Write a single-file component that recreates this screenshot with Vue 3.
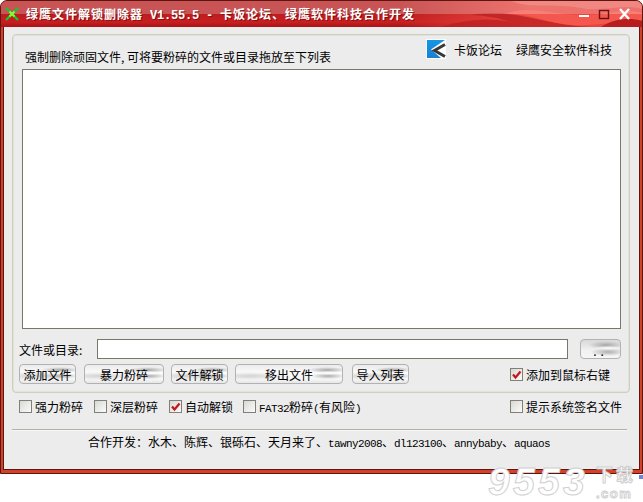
<template>
  <div class="win">
    <div class="titlebar">
      <svg class="flames" width="643" height="26" viewBox="0 0 643 26" preserveAspectRatio="none">
        <defs>
          <linearGradient id="fade" x1="0" x2="1" y1="0" y2="0">
            <stop offset="0.62" stop-color="#ef4c44" stop-opacity="0" />
            <stop offset="0.82" stop-color="#ef4c44" stop-opacity="0.9" />
            <stop offset="1" stop-color="#e8423c" stop-opacity="1" />
          </linearGradient>
        </defs>
        <rect width="643" height="26" fill="url(#fade)" />
        <path d="M440 26 C470 16 500 16 530 26 Z M470 14 C510 6 540 24 590 26 L520 26 C505 18 490 15 470 14 Z" fill="#b81d1e" opacity="0.7" />
        <path d="M505 13 C530 2 560 18 600 13 C612 11 625 8 642 12 L642 26 C620 16 600 26 570 24 C545 22 530 12 505 13 Z" fill="#f4574e" />
        <path d="M600 26 C612 18 628 16 642 20 L642 26 Z" fill="#b81d1e" />
        <rect width="643" height="13" fill="#fff" opacity="0.24" />
        <path d="M510 0 C530 8 555 2 580 7 C600 11 620 3 642 8 L642 0 Z" fill="#fff" opacity="0.16" />
      </svg>
      <svg class="app-icon" width="14" height="14" viewBox="0 0 14 14">
        <path d="M1 1 L13 13 M13 1 L1 13" stroke="#12c92a" stroke-width="2.4" />
        <path d="M4.5 4.5 L9.5 9.5 M9.5 4.5 L4.5 9.5" stroke="#8dfb3a" stroke-width="2" />
      </svg>
      <span class="title">绿鹰文件解锁删除器<span class="title-mono"> V1.55.5 - </span>卡饭论坛、绿鹰软件科技合作开发</span>
      <svg class="caption" width="54" height="16" viewBox="0 0 54 16">
        <rect x="1" y="9" width="10" height="2" fill="#fff" />
        <rect x="21.5" y="4.5" width="9" height="8" fill="none" stroke="#6a1212" stroke-width="1.4" />
        <path d="M42 3 L51 13 M51 3 L42 13" stroke="#fff" stroke-width="2.4" />
      </svg>
    </div>
    <div class="body">
      <div class="group">
        <div class="head">
          <span class="head-text">强制删除顽固文件, 可将要粉碎的文件或目录拖放至下列表</span>
          <div class="links">
            <svg class="logo" width="20" height="20" viewBox="0 0 20 20">
              <defs>
                <linearGradient id="kblue" x1="0" x2="0" y1="0" y2="1">
                  <stop offset="0" stop-color="#1597e5" />
                  <stop offset="1" stop-color="#1b7fd0" />
                </linearGradient>
              </defs>
              <rect width="20" height="20" fill="#fff" />
              <path d="M1 1 H19 L5 10.5 L15 19 H1 Z" fill="url(#kblue)" />
              <path d="M19 5.5 L8.5 11.5 L19 17.5" fill="none" stroke="#383838" stroke-width="3" />
            </svg>
            <span>卡饭论坛</span>
            <span class="link-b">绿鹰安全软件科技</span>
          </div>
        </div>
        <div class="listbox"></div>
        <div class="path-row">
          <label class="path-label">文件或目录:</label>
          <div class="input"></div>
          <button class="btn browse">..</button>
        </div>
        <div class="btn-row">
          <button
            v-for="b in buttons"
            :key="b.text"
            class="btn"
            :style="{ width: b.w + 'px', marginLeft: b.ml + 'px' }"
          >{{ b.text }}</button>
          <label class="check mouse-check">
            <span class="box">
              <svg width="13" height="13" viewBox="0 0 13 13"><path d="M3 6.5 L5.5 9.5 L10.5 3.5" fill="none" stroke="#c4161c" stroke-width="2.2" /></svg>
            </span>
            添加到鼠标右键
          </label>
        </div>
      </div>
      <div class="options">
        <label v-for="o in options" :key="o.text" class="check" :style="{ width: o.w + 'px' }">
          <span class="box">
            <svg v-if="o.on" width="13" height="13" viewBox="0 0 13 13"><path d="M3 6.5 L5.5 9.5 L10.5 3.5" fill="none" stroke="#c4161c" stroke-width="2.2" /></svg>
          </span>
          <span v-if="o.latin"><span class="latin">FAT32</span>粉碎<span class="latin">(</span>有风险<span class="latin">)</span></span>
          <span v-else>{{ o.text }}</span>
        </label>
        <label class="check sign-check">
          <span class="box"></span>
          提示系统签名文件
        </label>
      </div>
      <div class="sep"></div>
      <div class="credits">合作开发：水木、陈辉、银砾石、天月来了、<span class="latin">tawny2008</span>、<span class="latin">dl123100</span>、<span class="latin">annybaby</span>、<span class="latin">aquaos</span></div>
    </div>
  </div>
  <div class="watermark">
    <span class="wm-num">9553</span>
    <span class="wm-side">
      <span class="wm-cn">下载</span>
      <span class="wm-com">.com</span>
    </span>
  </div>
  <div class="wm-dot"></div>
</template>

<script setup>
const buttons = [
  { text: '添加文件', w: 57, ml: 0 },
  { text: '暴力粉碎', w: 80, ml: 8 },
  { text: '文件解锁', w: 57, ml: 7 },
  { text: '移出文件', w: 108, ml: 7 },
  { text: '导入列表', w: 57, ml: 9 },
];

const options = [
  { text: '强力粉碎', w: 75 },
  { text: '深层粉碎', w: 75 },
  { text: '自动解锁', w: 74, on: true },
  { text: 'FAT32粉碎(有风险)', w: 140, latin: true },
];
</script>

<style>
html, body { margin: 0; background: #fff; }
</style>

<style scoped>
.win {
  width: 643px;
  height: 474px;
  box-sizing: border-box;
  background: #d2412a;
  border: 1px solid #5e1510;
  border-radius: 7px 7px 0 0;
  overflow: hidden;
  display: flex;
  flex-direction: column;
  font-family: "Noto Sans CJK SC", "Liberation Sans", sans-serif;
  font-size: 12px;
  color: #000;
}
.titlebar {
  height: 26px;
  flex: none;
  display: flex;
  align-items: center;
  padding: 0 10px 0 4px;
  background: linear-gradient(to bottom, #b71f20 0, #b71f20 13px, #bd1d1e 14px, #c81f21 21px, #a81517 26px);
  position: relative;
}
.flames { position: absolute; left: 0; top: 0; }
.app-icon { flex: none; position: relative; }
.title {
  position: relative;
  margin-left: 7px;
  font-weight: 700;
  letter-spacing: 1px;
  color: #fff;
  white-space: pre;
  text-shadow: 1px 1px 0 rgba(90, 0, 0, 0.55);
}
.title-mono {
  font-family: "Liberation Mono", monospace;
  letter-spacing: -0.2px;
}
.caption { margin-left: auto; flex: none; position: relative; }
.body {
  flex: 1;
  margin: 0 2px 3px 2px;
  background: #ececec;
  border: 1px solid #5e1510;
  border-top: 0;
  padding: 7px 9px 0 8px;
  display: flex;
  flex-direction: column;
  min-height: 0;
}
.group {
  height: 359px;
  flex: none;
  box-sizing: border-box;
  border: 1px solid #cfcfbe;
  box-shadow: inset 0 0 0 1px #e2e2d8;
  border-radius: 4px;
  padding: 0 8px 0 9px;
  display: flex;
  flex-direction: column;
}
.head {
  height: 34px;
  flex: none;
  display: flex;
  justify-content: space-between;
  padding-left: 3px;
}
.head-text { align-self: flex-end; padding-bottom: 4px; }
.links {
  display: flex;
  align-items: center;
  height: 20px;
  margin-top: 4px;
  padding-right: 9px;
}
.logo { margin-right: 8px; }
.link-b { margin-left: 14px; }
.listbox {
  height: 260px;
  flex: none;
  box-sizing: border-box;
  background: #fff;
  border: 1px solid #77776a;
}
.path-row {
  display: flex;
  align-items: center;
  flex: none;
  height: 20px;
  margin: 10px 0 0 -3px;
}
.path-label { width: 78px; flex: none; }
.input {
  flex: 1;
  height: 20px;
  box-sizing: border-box;
  background: #fff;
  border: 1px solid #77776a;
}
.btn {
  height: 20px;
  box-sizing: border-box;
  padding: 0;
  flex: none;
  font: inherit;
  color: #000;
  border: 1px solid #b2b2b2;
  border-radius: 4px;
  background:
    radial-gradient(ellipse 13px 2px at calc(100% - 13px) 8px, #fff 0, transparent 100%),
    radial-gradient(ellipse 19px 3px at calc(100% - 15px) 5px, #a6a6a6 0, transparent 100%),
    radial-gradient(ellipse 17px 3px at calc(100% - 14px) 11px, #acacac 0, transparent 100%),
    radial-gradient(ellipse 36px 4px at 14px 11px, #d2d2d2 0, transparent 100%),
    linear-gradient(to bottom, #ebebeb, #fbfbfb 45%, #f5f5f5 80%, #e6e6e6);
}
.browse {
  width: 41px;
  margin-left: 12px;
  padding-top: 3px;
  letter-spacing: 4px;
  line-height: 1;
  background:
    radial-gradient(ellipse 15px 2px at calc(100% - 12px) 8px, #fff 0, transparent 100%),
    radial-gradient(ellipse 18px 4px at calc(100% - 14px) 5px, #a8a8a8 0, transparent 100%),
    radial-gradient(ellipse 18px 4px at calc(100% - 12px) 12px, #b0b0b0 0, transparent 100%),
    linear-gradient(to bottom, #d8d8d8, #f2f2f2 60%, #f6f6f6);
}
.btn-row {
  display: flex;
  align-items: center;
  flex: none;
  height: 20px;
  margin: 5px 0 0 -3px;
}
.check {
  display: flex;
  align-items: center;
  gap: 3px;
  white-space: nowrap;
}
.mouse-check { margin-left: auto; margin-right: 11px; }
.sign-check { margin-left: auto; margin-right: 8px; }
.box {
  width: 13px;
  height: 13px;
  box-sizing: border-box;
  border: 1px solid #808078;
  background: linear-gradient(135deg, #d8d8d2, #fbfbfb);
  flex: none;
  display: flex;
  overflow: hidden;
}
.box svg { margin: -1px; flex: none; }
.options {
  display: flex;
  align-items: center;
  flex: none;
  height: 16px;
  margin: 5px 0 0 7px;
}
.sep {
  height: 1px;
  flex: none;
  background: #b3b0a2;
  box-shadow: 0 1px 0 #f8f8f8;
  margin: 15px 3px 0 0;
}
.credits {
  flex: none;
  height: 24px;
  line-height: 24px;
  padding-left: 76px;
  white-space: nowrap;
}
.latin {
  font-family: "Liberation Mono", monospace;
  font-size: 11px;
  letter-spacing: -0.6px;
}
.watermark {
  position: absolute;
  left: 488px;
  top: 465px;
  display: flex;
  align-items: flex-start;
  gap: 8px;
  color: #fff;
  font-family: "Liberation Sans", sans-serif;
  font-weight: 700;
  -webkit-text-stroke: 1px #d0d0d0;
}
.wm-num {
  font-size: 39px;
  line-height: 34px;
  font-style: italic;
  letter-spacing: 3.3px;
}
.wm-side {
  display: flex;
  flex-direction: column;
  align-items: flex-start;
}
.wm-cn {
  font-family: "Noto Sans CJK SC", sans-serif;
  font-size: 17px;
  line-height: 18px;
  letter-spacing: 3px;
}
.wm-com {
  font-size: 13px;
  line-height: 14px;
  letter-spacing: 1.5px;
  margin-top: 4px;
}
.wm-dot {
  position: absolute;
  left: 639px;
  top: 475px;
  width: 4px;
  height: 4px;
  background: #6f86d6;
}
</style>
